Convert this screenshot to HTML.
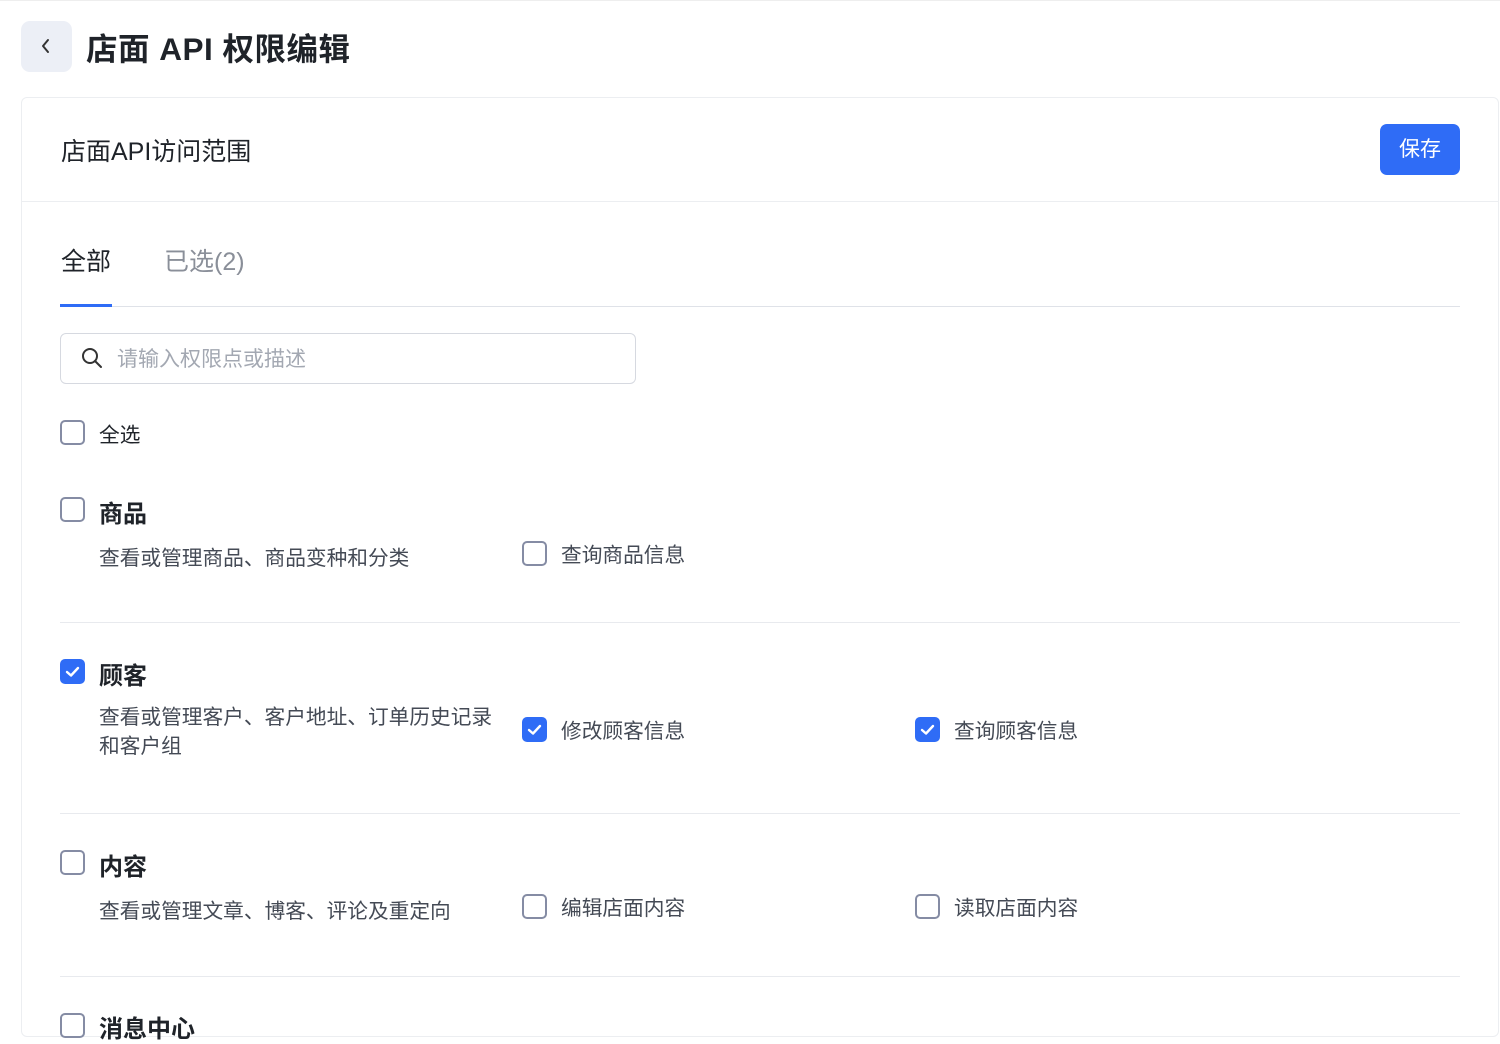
<!DOCTYPE html>
<html><head><meta charset="utf-8"><style>
*{box-sizing:border-box;margin:0;padding:0}
body{width:1500px;height:1024px;overflow:hidden;background:#fff;font-family:"Liberation Sans","Noto Sans CJK SC",sans-serif;color:#1f2329;position:relative}
.a{position:absolute;white-space:nowrap}
.cb{position:absolute;width:25px;height:25px;border:2px solid #858ca4;border-radius:5px;background:#fff}
.cb.on{background:#2f6cf6;border-color:#2f6cf6}
.cb.on svg{position:absolute;left:3px;top:4px}
.t{font-size:20.7px;color:#444a55}
.h{font-size:24px;font-weight:bold;color:#1f2329}
.line{position:absolute;left:60px;width:1400px;height:1px;background:#e8eaee}
</style></head><body>
<div class="a" style="left:0;top:0;width:1500px;height:1px;background:#eee"></div>
<div class="a" style="left:21px;top:21px;width:51px;height:51px;border-radius:9px;background:#eceff6"></div>
<svg class="a" style="left:39px;top:38px" width="14" height="16" viewBox="0 0 14 16"><path d="M9 2 L4 8 L9 14" stroke="#333" stroke-width="2" fill="none" stroke-linecap="round" stroke-linejoin="round"/></svg>
<div class="a" style="left:86px;top:24px;font-size:31.5px;font-weight:bold;color:#1f2329;letter-spacing:0.5px">店面 API 权限编辑</div>
<div class="a" style="left:21px;top:97px;width:1478px;height:940px;border:1px solid #eceef1;border-radius:6px"></div>
<div class="a" style="left:22px;top:201px;width:1476px;height:1px;background:#eceef1"></div>
<div class="a" style="left:61px;top:132px;font-size:25px;color:#1f2329">店面API访问范围</div>
<div class="a" style="left:1380px;top:124px;width:80px;height:51px;border-radius:7px;background:#2f6cf6;color:#fff;font-size:21px;line-height:51px;text-align:center">保存</div>
<div class="a" style="left:61px;top:242px;font-size:25px;color:#1f2329">全部</div>
<div class="a" style="left:164px;top:242px;font-size:25px;color:#8a8f99">已选(2)</div>
<div class="a" style="left:60px;top:306px;width:1400px;height:1px;background:#dfe2e8"></div>
<div class="a" style="left:60px;top:304px;width:52px;height:3px;background:#2f6cf6"></div>
<div class="a" style="left:60px;top:333px;width:576px;height:51px;border:1px solid #d6d9e0;border-radius:6px"></div>
<svg class="a" style="left:81px;top:347px" width="22" height="22" viewBox="0 0 22 22"><circle cx="9" cy="9" r="7" stroke="#333" stroke-width="2" fill="none"/><path d="M14 14 L20 20" stroke="#333" stroke-width="2" stroke-linecap="round"/></svg>
<div class="a" style="left:117px;top:343px;font-size:21px;color:#a3a8b2">请输入权限点或描述</div>
<div class="cb" style="left:60px;top:420px"></div><div class="a t" style="left:99px;top:418px;color:#1f2329">全选</div>

<div class="cb" style="left:60px;top:497px"></div><div class="a h" style="left:99px;top:494px">商品</div>
<div class="a t" style="left:99px;top:541px">查看或管理商品、商品变种和分类</div>
<div class="cb" style="left:522px;top:541px"></div><div class="a t" style="left:561px;top:538px">查询商品信息</div>
<div class="line" style="top:622px"></div>

<div class="cb on" style="left:60px;top:659px"><svg width="15" height="13" viewBox="0 0 15 13"><path d="M2 7 L6 10.5 L13 3" stroke="#fff" stroke-width="2.4" fill="none" stroke-linecap="round" stroke-linejoin="round"/></svg></div><div class="a h" style="left:99px;top:656px">顾客</div>
<div class="a t" style="left:99px;top:703px;line-height:29px">查看或管理客户、客户地址、订单历史记录<br>和客户组</div>
<div class="cb on" style="left:522px;top:717px"><svg width="15" height="13" viewBox="0 0 15 13"><path d="M2 7 L6 10.5 L13 3" stroke="#fff" stroke-width="2.4" fill="none" stroke-linecap="round" stroke-linejoin="round"/></svg></div><div class="a t" style="left:561px;top:714px">修改顾客信息</div>
<div class="cb on" style="left:915px;top:717px"><svg width="15" height="13" viewBox="0 0 15 13"><path d="M2 7 L6 10.5 L13 3" stroke="#fff" stroke-width="2.4" fill="none" stroke-linecap="round" stroke-linejoin="round"/></svg></div><div class="a t" style="left:954px;top:714px">查询顾客信息</div>
<div class="line" style="top:813px"></div>

<div class="cb" style="left:60px;top:850px"></div><div class="a h" style="left:99px;top:847px">内容</div>
<div class="a t" style="left:99px;top:894px">查看或管理文章、博客、评论及重定向</div>
<div class="cb" style="left:522px;top:894px"></div><div class="a t" style="left:561px;top:891px">编辑店面内容</div>
<div class="cb" style="left:915px;top:894px"></div><div class="a t" style="left:954px;top:891px">读取店面内容</div>
<div class="line" style="top:976px"></div>

<div class="cb" style="left:60px;top:1013px"></div><div class="a h" style="left:99px;top:1009px">消息中心</div>
</body></html>
